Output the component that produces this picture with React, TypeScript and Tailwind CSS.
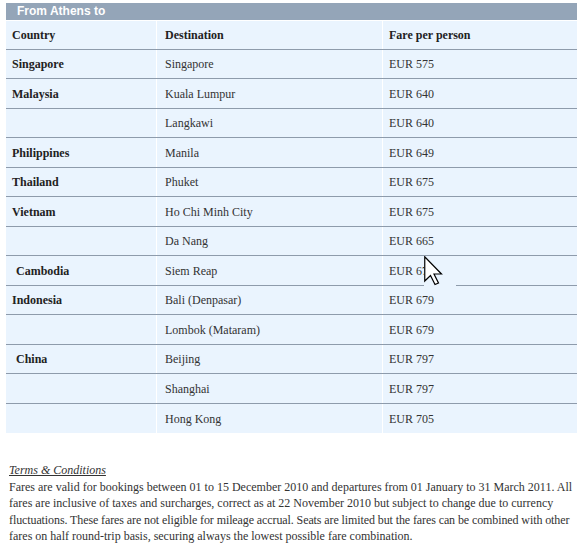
import React from "react";

type Row = { country: string; dest: string; fare: string; indent?: boolean };

const rows: Row[] = [
  { country: "Singapore", dest: "Singapore", fare: "EUR 575" },
  { country: "Malaysia", dest: "Kuala Lumpur", fare: "EUR 640" },
  { country: "", dest: "Langkawi", fare: "EUR 640" },
  { country: "Philippines", dest: "Manila", fare: "EUR 649" },
  { country: "Thailand", dest: "Phuket", fare: "EUR 675" },
  { country: "Vietnam", dest: "Ho Chi Minh City", fare: "EUR 675" },
  { country: "", dest: "Da Nang", fare: "EUR 665" },
  { country: "Cambodia", dest: "Siem Reap", fare: "EUR 675", indent: true },
  { country: "Indonesia", dest: "Bali (Denpasar)", fare: "EUR 679" },
  { country: "", dest: "Lombok (Mataram)", fare: "EUR 679" },
  { country: "China", dest: "Beijing", fare: "EUR 797", indent: true },
  { country: "", dest: "Shanghai", fare: "EUR 797" },
  { country: "", dest: "Hong Kong", fare: "EUR 705" },
];

const serif = '"Liberation Serif", "Times New Roman", serif';

export default function App() {
  return (
    <div className="relative w-[581px] h-[554px] bg-white overflow-hidden" style={{ fontFamily: serif }}>
      <div className="ml-[6px] mt-[3px] w-[571px]">
        <div
          className="h-[17px] bg-[#94a5b8] pl-[11px] text-[12px] leading-[17px] font-bold text-white"
          style={{ fontFamily: '"Liberation Sans", Arial, sans-serif' }}
        >
          From Athens to
        </div>
        <div className="flex flex-col" style={{ fontFamily: serif }}>
          <div className="grid h-[29.5px] grid-cols-[150px_225px_194px] gap-x-px border-b border-[#8e9bab] bg-white pt-px text-[12px] font-bold text-[#222]">
            <div className="flex items-center bg-[#eaf4fe] pl-[6px]">Country</div>
            <div className="flex items-center bg-[#eaf4fe] pl-[8px]">Destination</div>
            <div className="flex items-center bg-[#eaf4fe] pl-[6px]">Fare per person</div>
          </div>
          {rows.map((r, i) => (
            <div
              key={i}
              className={
                "grid h-[29.5px] grid-cols-[150px_225px_194px] gap-x-px bg-white text-[12px] text-[#333] " +
                (i < rows.length - 1 ? "border-b border-[#8e9bab]" : "")
              }
            >
              <div className={"flex items-center bg-[#eaf4fe] pt-px font-bold text-[#222] " + (r.indent ? "pl-[10px]" : "pl-[6px]")}>
                {r.country}
              </div>
              <div className="flex items-center bg-[#eaf4fe] pt-px pl-[8px]">{r.dest}</div>
              <div className="flex items-center bg-[#eaf4fe] pt-px pl-[6px]">{r.fare}</div>
            </div>
          ))}
        </div>
      </div>

      <div className="ml-[9px] mt-[29px] w-[572px] whitespace-nowrap text-[12px] leading-[16.5px] text-[#333]" style={{ fontFamily: serif }}>
        <div className="italic underline">Terms &amp; Conditions</div>
        <p>
          Fares are valid for bookings between 01 to 15 December 2010 and departures from 01 January to 31 March 2011. All
          <br />
          fares are inclusive of taxes and surcharges, correct as at 22 November 2010 but subject to change due to currency
          <br />
          <span className="tracking-[-0.1px]">
            fluctuations. These fares are not eligible for mileage accrual. Seats are limited but the fares can be combined with other
          </span>
          <br />
          fares on half round-trip basis, securing always the lowest possible fare combination.
        </p>
      </div>

      {/* mouse cursor overlay */}
      <div className="absolute left-[424px] top-[257px] h-[31px] w-[32px] bg-[#eaf4fe]">
        <svg className="absolute left-0 top-[-1px]" width="20" height="31" viewBox="0 0 20 31">
          <path
            d="M0.75 0.75 L0.75 25 L6.5 19.5 L11 28.5 L14.5 27 L10 18 L17.5 18 Z"
            fill="white"
            stroke="black"
            strokeWidth="1.2"
            strokeLinejoin="miter"
          />
        </svg>
      </div>
    </div>
  );
}
